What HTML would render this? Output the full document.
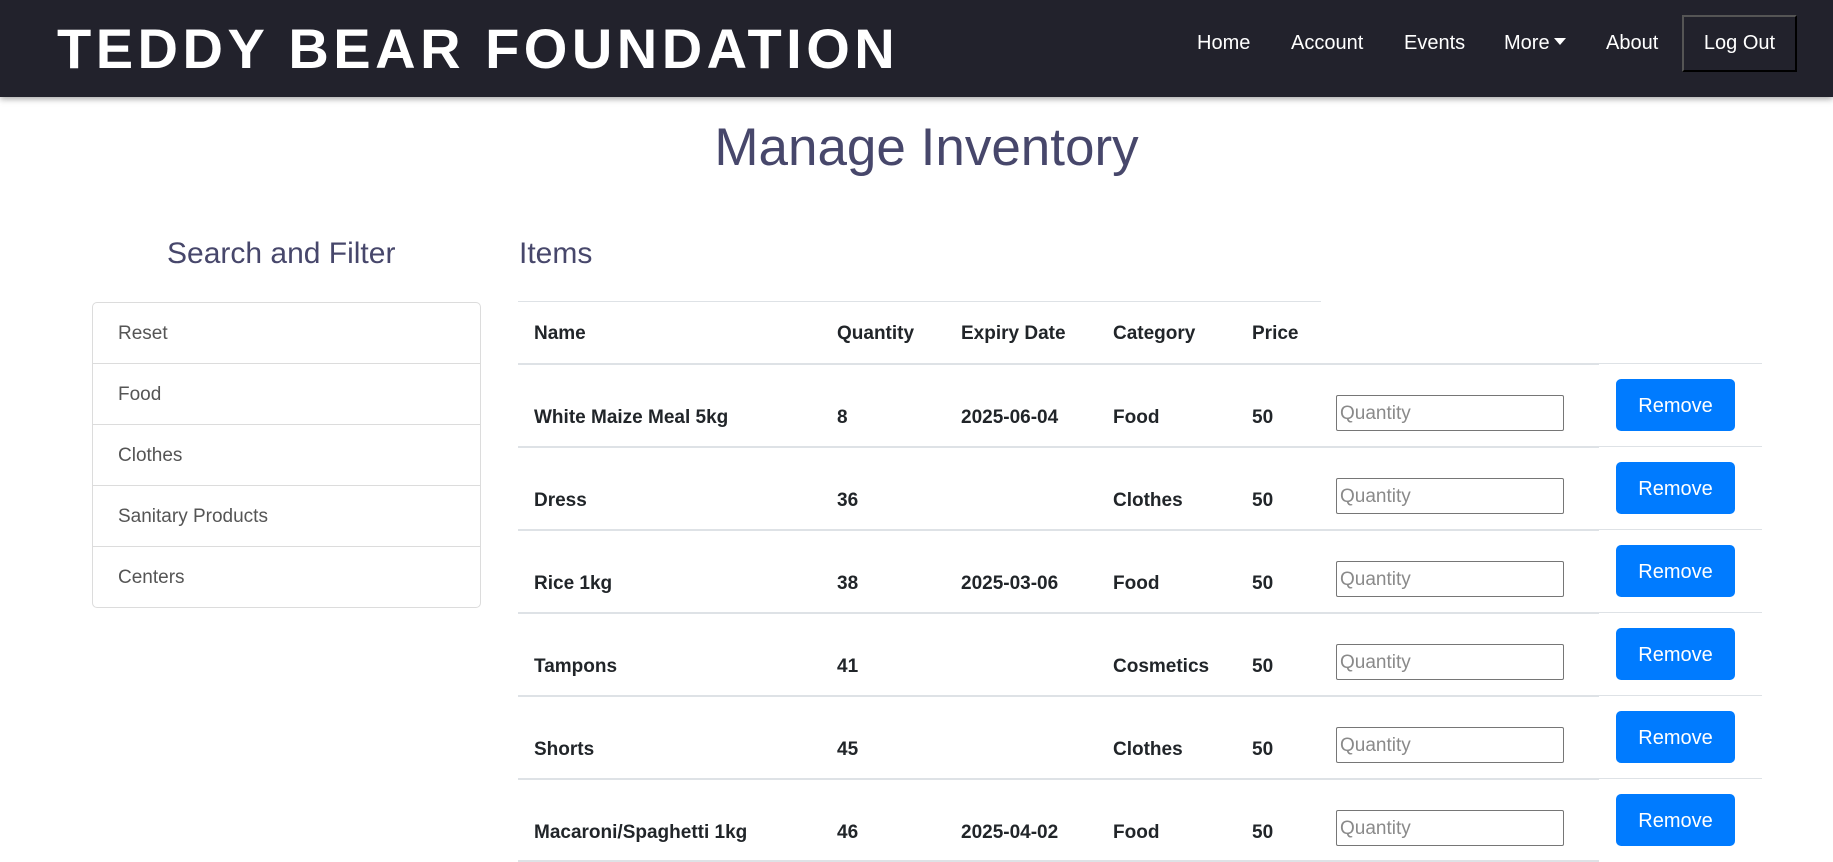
<!DOCTYPE html>
<html><head><meta charset="utf-8"><style>
*{margin:0;padding:0;box-sizing:border-box}
body{width:1833px;height:861px;overflow:hidden;background:#fff;font-family:"Liberation Sans",sans-serif;position:relative}
.nav{position:absolute;left:0;top:0;width:1833px;height:97px;background:#22222c;box-shadow:0 2px 6px rgba(0,0,0,.35)}
.brand{position:absolute;left:57px;top:14px;color:#fff;font-weight:bold;font-size:56px;letter-spacing:4.5px;line-height:70px;white-space:nowrap}
.nl{position:absolute;top:29px;color:#fff;font-size:20px;line-height:28px}
.caret{display:inline-block;width:0;height:0;border-left:6px solid transparent;border-right:6px solid transparent;border-top:7px solid #fff;vertical-align:4px;margin-left:4px}
.logout{position:absolute;left:1682px;top:15px;width:115px;height:57px;border:2px solid;border-color:#555 #000 #000 #555;color:#fff;font-size:20px;text-align:center;line-height:53px}
.abs{position:absolute;white-space:nowrap}
h1{position:absolute;left:0;width:1853px;text-align:center;top:116px;font-weight:normal;font-size:53px;color:#47476b;line-height:64px}
.h3{font-size:30px;color:#47476b;line-height:40px}
.lg{position:absolute;left:92px;top:302px;width:389px;height:306px;border:1px solid #dcdcdc;border-radius:5px}
.lg div{height:61px;border-bottom:1px solid #dcdcdc;padding-left:25px;line-height:62px;font-size:19px;color:#555}
.lg div:last-child{border-bottom:none}
.th{position:absolute;font-weight:bold;font-size:19px;color:#212529}
.line{position:absolute;height:2px;background:#dee2e6}
.inp{position:absolute;width:228px;height:36px;border:1px solid #767676;border-radius:2px;color:#8a8a8a;font-size:19px;line-height:35px;padding-left:3px}
.btn{position:absolute;width:119px;height:52px;background:#007bff;border-radius:5px;color:#fff;font-size:20px;text-align:center;line-height:54px}
</style></head><body>
<div class="nav">
<div class="brand">TEDDY BEAR FOUNDATION</div>
<div class="nl" style="left:1197px">Home</div>
<div class="nl" style="left:1291px">Account</div>
<div class="nl" style="left:1404px">Events</div>
<div class="nl" style="left:1504px">More<span class="caret"></span></div>
<div class="nl" style="left:1606px">About</div>
<div class="logout">Log Out</div>
</div>
<h1>Manage Inventory</h1>
<div class="abs h3" style="left:167px;top:234px">Search and Filter</div>
<div class="abs h3" style="left:519px;top:234px">Items</div>
<div class="lg"><div>Reset</div><div>Food</div><div>Clothes</div><div>Sanitary Products</div><div>Centers</div></div>

<div class="line" style="left:518px;top:301px;width:803px;height:1px"></div>
<div class="th" style="left:534px;top:323px">Name</div>
<div class="th" style="left:837px;top:323px">Quantity</div>
<div class="th" style="left:961px;top:323px">Expiry Date</div>
<div class="th" style="left:1113px;top:323px">Category</div>
<div class="th" style="left:1252px;top:323px">Price</div>

<div id="rows"></div>
<script>
var d=[["White Maize Meal 5kg","8","2025-06-04","Food"],["Dress","36","","Clothes"],["Rice 1kg","38","2025-03-06","Food"],["Tampons","41","","Cosmetics"],["Shorts","45","","Clothes"],["Macaroni/Spaghetti 1kg","46","2025-04-02","Food"]];
var h="";
for(var i=0;i<d.length;i++){var t=364+i*83;
h+='<div class="line" style="left:518px;top:'+(t-1)+'px;width:1081px"></div>';
h+='<div class="line" style="left:1599px;top:'+(t-1)+'px;width:163px;height:1px"></div>';
var y=t+43;
h+='<div class="th" style="left:534px;top:'+y+'px">'+d[i][0]+'</div>';
h+='<div class="th" style="left:837px;top:'+y+'px">'+d[i][1]+'</div>';
h+='<div class="th" style="left:961px;top:'+y+'px">'+d[i][2]+'</div>';
h+='<div class="th" style="left:1113px;top:'+y+'px">'+d[i][3]+'</div>';
h+='<div class="th" style="left:1252px;top:'+y+'px">50</div>';
h+='<div class="inp" style="left:1336px;top:'+(t+31)+'px">Quantity</div>';
h+='<div class="btn" style="left:1616px;top:'+(t+15)+'px">Remove</div>';
}
h+='<div class="line" style="left:518px;top:860px;width:1081px"></div>';
document.getElementById("rows").innerHTML=h;
</script>
</body></html>
